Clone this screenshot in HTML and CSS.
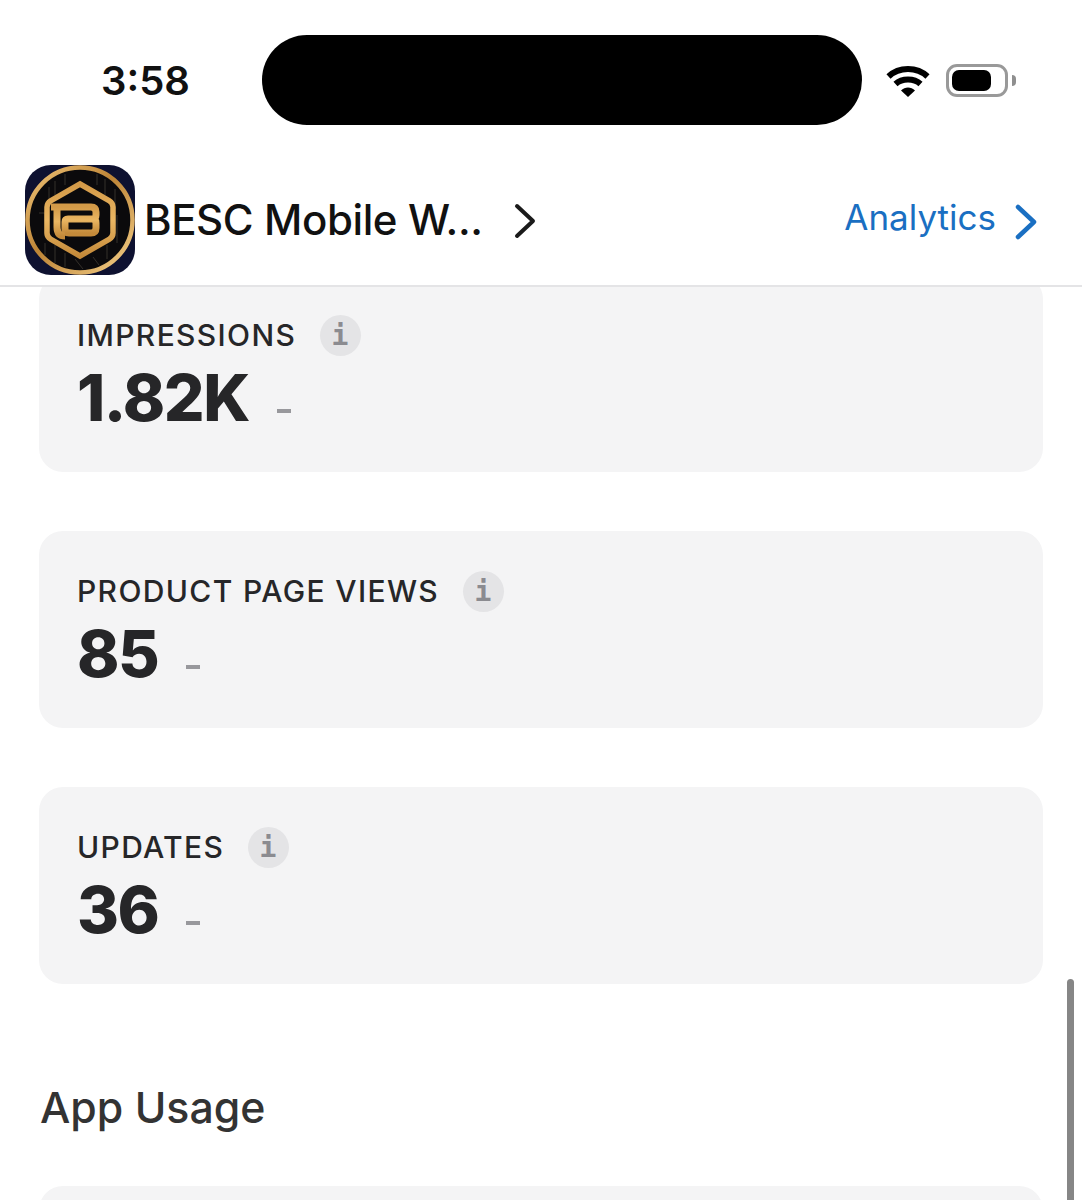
FILE: index.html
```html
<!DOCTYPE html>
<html lang="en">
<head>
  <meta charset="UTF-8" />
  <meta name="viewport" content="width=device-width, initial-scale=1.0"/>
  <title>BESC Mobile Wallet - Analytics</title>
  <link rel="stylesheet" href="styles.css">
</head>
<body>
  <div class="phone">
    <div class="status-bar">
      <div class="time">3:58</div>
      <div class="island"></div>
      <div class="status-icons">
        <svg class="wifi" width="44" height="34" viewBox="0 0 44 34">
          <path d="M2.5 13.5C13 3.5 31 3.5 41.5 13.5" fill="none" stroke="#000" stroke-width="6"/>
          <path d="M9.5 21C16 15 28 15 34.5 21" fill="none" stroke="#000" stroke-width="6"/>
          <path d="M15 27.5C19 23.5 25 23.5 29 27.5L22 34Z" fill="#000"/>
        </svg>
        <div class="battery"><div class="battery-level"></div></div>
        <div class="battery-cap"></div>
      </div>
    </div>

    <div class="app-header">
      <svg class="app-icon" width="110" height="110" viewBox="0 0 110 110">
        <defs>
          <linearGradient id="gold" x1="0" y1="0" x2="1" y2="1">
            <stop offset="0" stop-color="#f0c478"/>
            <stop offset="0.45" stop-color="#bd8436"/>
            <stop offset="1" stop-color="#f5d089"/>
          </linearGradient>
          <linearGradient id="goldMark" x1="0" y1="0" x2="0" y2="1">
            <stop offset="0" stop-color="#d39a48"/>
            <stop offset="0.5" stop-color="#eab662"/>
            <stop offset="1" stop-color="#c48a3a"/>
          </linearGradient>
        </defs>
        <rect width="110" height="110" rx="26" fill="#0e1130"/>
        <circle cx="55" cy="55" r="52.500" fill="#0b0a0c" stroke="url(#gold)" stroke-width="4.500"/>
        <!-- circuit traces behind the badge -->
        <path d="M24 22V36M30 16V30M40 9V20M72 9V20M80 14V30M90 24V44M14 48H20V70M92 50V78M20 78V90M30 80V98M40 88V102M50 94L58 104M68 92L74 100M82 80V94" fill="none" stroke="#34302a" stroke-width="1"/>
        <path d="M55 19L84 35.500Q88 38 88 42V68Q88 72 84 74.500L55 91L26 74.500Q22 72 22 68V42Q22 38 26 35.500Z" fill="#0b0a0c" stroke="url(#goldMark)" stroke-width="5.500"/>
        <g fill="none" stroke="url(#goldMark)" stroke-width="7">
          <path d="M26 42H66Q71 42 71 47V50Q71 54 67 54H43Q40 54 40 57V64Q40 68 44 68H66Q71 68 71 63V58Q71 54 67 54"/>
          <path d="M32 42V62Q32 71 40 71"/>
        </g>
      </svg>
      <div class="app-name">BESC Mobile W...</div>
      <svg class="chevron" width="24" height="36" viewBox="0 0 24 36">
        <path d="M4 3L20 18L4 33" fill="none" stroke="#1a1a1a" stroke-width="4" stroke-linecap="round" stroke-linejoin="round"/>
      </svg>
      <div class="section-link">Analytics</div>
      <svg class="chevron-blue" width="24" height="36" viewBox="0 0 24 36">
        <path d="M4 3L20 18L4 33" fill="none" stroke="#1a6fc2" stroke-width="4.500" stroke-linecap="round" stroke-linejoin="round"/>
      </svg>
    </div>

    <div class="content">
      <div class="stat-card">
        <div class="stat-label">IMPRESSIONS <span class="info">i</span></div>
        <div class="stat-value">1.82K <span class="stat-change"></span></div>
      </div>
      <div class="stat-card">
        <div class="stat-label">PRODUCT PAGE VIEWS <span class="info">i</span></div>
        <div class="stat-value">85 <span class="stat-change"></span></div>
      </div>
      <div class="stat-card">
        <div class="stat-label">UPDATES <span class="info">i</span></div>
        <div class="stat-value">36 <span class="stat-change"></span></div>
      </div>
      <h2 class="section-title">App Usage</h2>
      <div class="stat-card"></div>
    </div>

    <div class="scroll-thumb"></div>
  </div>
</body>
</html>
```

FILE: styles.css
```css
:root {
  --card-bg: #f4f4f5;
  --text: #262628;
  --blue: #1a6fc2;
}

html, body {
  margin: 0;
  padding: 0;
  background: #fff;
}

body {
  font-family: Inter, 'Noto Sans', sans-serif;
  color: var(--text);
}

.phone {
  position: relative;
  width: 1082px;
  height: 1200px;
  overflow: hidden;
  background: #fff;
}

.status-bar {
  display: flex;
  align-items: center;
  height: 160px;
  padding: 0 64px 0 101px;
  box-sizing: border-box;
}

.time {
  width: 161px;
  font-size: 40px;
  font-weight: 600;
  color: #111;
}

.island {
  width: 600px;
  height: 90px;
  border-radius: 45px;
  background: #000;
}

.status-icons {
  display: flex;
  align-items: center;
  margin-left: 24px;
}

.wifi {
  margin-right: 16px;
}

.battery {
  box-sizing: border-box;
  width: 62px;
  height: 33px;
  padding: 3px;
  border: 3px solid #999;
  border-radius: 11px;
}

.battery-level {
  width: 39px;
  height: 100%;
  background: #000;
  border-radius: 7px;
}

.battery-cap {
  width: 4px;
  height: 11px;
  margin-left: 4px;
  background: #8f8f8f;
  border-radius: 0 6px 6px 0;
}

.app-header {
  position: relative;
  z-index: 1;
  display: flex;
  align-items: center;
  height: 127px;
  padding: 0 44px 7px 25px;
  box-sizing: border-box;
  background: #fff;
  border-bottom: 2px solid #e4e4e6;
}

.app-icon {
  flex: none;
  margin: 2px 9px 0 0;
}

.app-name {
  font-size: 42px;
  font-weight: 500;
  letter-spacing: -0.4px;
  color: #111;
}

.chevron {
  margin: 4px 0 0 30px;
}

.section-link {
  margin-left: auto;
  padding-bottom: 4px;
  font-size: 35px;
  color: var(--blue);
}

.chevron-blue {
  margin: 6px 0 0 18px;
}

.content {
  display: flex;
  flex-direction: column;
  gap: 59px;
  margin-top: -12px;
  padding: 0 39px;
}

.stat-card {
  box-sizing: border-box;
  height: 197px;
  padding: 39px 38px 0;
  background: var(--card-bg);
  border-radius: 24px;
}

.stat-label {
  display: flex;
  align-items: center;
  height: 42px;
  font-size: 30px;
  font-weight: 500;
  letter-spacing: 1.35px;
}

.info {
  display: inline-flex;
  justify-content: center;
  align-items: center;
  width: 41px;
  height: 41px;
  margin-left: 24px;
  border-radius: 50%;
  background: #e4e4e6;
  color: #8b8b90;
  font-family: 'DejaVu Sans Mono', monospace;
  font-size: 28px;
  font-weight: 700;
}

.stat-value {
  display: flex;
  align-items: center;
  margin-top: 2px;
  font-size: 64px;
  font-weight: 800;
  line-height: 80px;
  letter-spacing: -1.5px;
}

/* the dash shown when there is no change to report */
.stat-change {
  width: 14px;
  height: 4px;
  margin: 26px 0 0 28px;
  background: #98989c;
}

.section-title {
  margin: 39px 0 -7px 1px;
  font-size: 42.8px;
  font-weight: 500;
  line-height: 52px;
  color: #333;
}

.scroll-thumb {
  position: absolute;
  left: 1067px;
  top: 979px;
  width: 7px;
  height: 240px;
  border-radius: 4px;
  background: #868686;
}
```
